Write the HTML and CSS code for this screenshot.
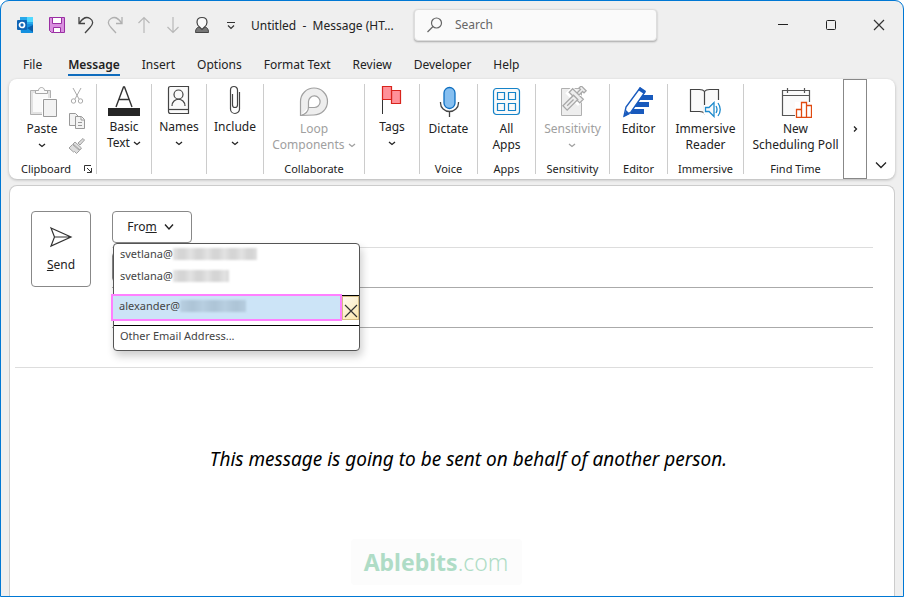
FILE: index.html
```html
<!DOCTYPE html>
<html lang="en">
  <head>
    <meta charset="utf-8">
    <title>Untitled - Message (HTML)</title>
    <link rel="stylesheet" href="styles.css">
  </head>
  <body>
    <div class="window">
      <header class="titlebar">
        <div class="quick">
          <button class="app" aria-label="Outlook">
            <svg width="18" height="18" viewBox="0 0 18 18"><path fill="#28a8ea" d="M4 1h13v8H4z"/><path fill="#50d9ff" d="M11 1h6v5h-6z"/><path fill="#1490df" d="M4 8h13v9H5z"/><path fill="#0a5ca8" d="M17 9v7l-6-4z"/><rect x="1" y="4" width="10" height="10" rx="1" fill="#0f64b5"/><circle cx="6" cy="9" r="2.500" fill="none" stroke="#fff" stroke-width="1.700"/></svg>
          </button>
          <button aria-label="Save">
            <svg width="18" height="18" viewBox="0 0 18 18"><path fill="#d98fdf" stroke="#9a2fa3" d="M1.500 1.500h15v15h-13l-2-2z"/><path fill="#fff" stroke="#9a2fa3" d="M4.500 1.500h9v6h-9zM5.500 11.500h7v5h-7z"/></svg>
          </button>
          <button aria-label="Undo">
            <svg width="18" height="18" viewBox="0 0 18 18" fill="none" stroke="#444" stroke-width="1.300"><path d="M2 1v6.500h6M2.500 7C5 3 9 0 13 2.500s3 6 0 9L8 17"/></svg>
          </button>
          <button aria-label="Redo">
            <svg width="18" height="18" viewBox="0 0 18 18" fill="none" stroke="#b0b0b0" stroke-width="1.300"><path d="M16 1v6.500h-6M15.500 7C13 3 9 0 5 2.500s-3 6 0 9l5 5.500"/></svg>
          </button>
          <button aria-label="Previous item">
            <svg width="18" height="18" viewBox="0 0 18 18" fill="none" stroke="#b8b8b8" stroke-width="1.200"><path d="M9 17V1.500M3.500 7L9 1.500 14.500 7"/></svg>
          </button>
          <button aria-label="Next item">
            <svg width="18" height="18" viewBox="0 0 18 18" fill="none" stroke="#b8b8b8" stroke-width="1.200"><path d="M9 1v15.500M3.500 11L9 16.500l5.500-5.500"/></svg>
          </button>
          <button aria-label="Contact">
            <svg width="18" height="18" viewBox="0 0 18 18"><path fill="#777" stroke="#444" d="M2.500 16.500c0-4 2-5.500 4-5.500h5c2 0 4 1.500 4 5.500z"/><path fill="#fafafa" stroke="#444" stroke-width="1.200" d="M9 1.500c3 0 5 2 5 4.800 0 2-1 3.700-2.500 4.700L9 13.500 6.500 11C5 10 4 8.300 4 6.300 4 3.500 6 1.500 9 1.500z"/></svg>
          </button>
          <button aria-label="Customize toolbar">
            <svg width="18" height="18" viewBox="0 0 18 18" fill="none" stroke="#333" stroke-width="1.200"><path d="M5 6.500h8M6 9.500l3 3 3-3"/></svg>
          </button>
        </div>
        <div class="title">Untitled&nbsp; -&nbsp; Message (HT...</div>
        <label class="search">
          <svg width="16" height="16" viewBox="0 0 16 16" fill="none" stroke="#666" stroke-width="1.200"><circle cx="9.500" cy="6" r="5"/><path d="M6 9.500L.5 15"/></svg>
          <input type="text" placeholder="Search" aria-label="Search">
        </label>
        <div class="window-buttons">
          <button aria-label="Minimize"><svg width="12" height="12" viewBox="0 0 12 12"><path stroke="#222" d="M1 5.500h10"/></svg></button>
          <button aria-label="Maximize"><svg width="12" height="12" viewBox="0 0 12 12"><rect x="1.500" y="1.500" width="9" height="9" rx="1" fill="none" stroke="#222"/></svg></button>
          <button aria-label="Close"><svg width="12" height="12" viewBox="0 0 12 12"><path stroke="#333" stroke-width="1.200" d="M1 1l10 10M11 1L1 11"/></svg></button>
        </div>
      </header>

      <nav class="tabs">
        <a href="#">File</a>
        <a href="#" class="active">Message</a>
        <a href="#">Insert</a>
        <a href="#">Options</a>
        <a href="#">Format Text</a>
        <a href="#">Review</a>
        <a href="#">Developer</a>
        <a href="#">Help</a>
      </nav>

      <section class="ribbon">
        <div class="group clipboard">
          <div class="commands">
            <button class="command tall">
              <svg width="32" height="32" viewBox="0 0 32 32"><path fill="#e2e2e2" stroke="#b0b0b0" d="M4.500 4.500h20v24h-20z"/><path fill="#fafafa" d="M7 7h15v19H7z"/><path fill="#fafafa" stroke="#a8a8a8" d="M9.500 7.500v-3h3c0-4 6-4 6 0h3v3z"/><path fill="#f3f3f3" stroke="#fff" stroke-width="3" d="M17.500 13.500h13v17h-13z"/><path fill="#f3f3f3" stroke="#999" d="M17.500 13.500h13v17h-13z"/></svg>
              <span>Paste</span>
              <svg class="chevron" width="8" height="8" viewBox="0 0 8 8"><path d="M1 3l3 2.500L7 3"/></svg>
            </button>
            <div class="side">
              <button aria-label="Cut"><svg width="18" height="18" viewBox="0 0 18 18" fill="none" stroke="#aaa"><path d="M5 1l6 11M13 1L7 12"/><circle cx="5.500" cy="14" r="2.200"/><circle cx="12.500" cy="14" r="2.200"/></svg></button>
              <button aria-label="Copy"><svg width="18" height="18" viewBox="0 0 18 18" fill="#f3f3f3" stroke="#999"><path d="M1.500 1.500h6l3 3v9h-9z"/><path d="M7.500 4.500h6l3 3v9h-9zM13 5v3h3M10 10.500h4M10 13.500h4"/></svg></button>
              <button aria-label="Format painter"><svg width="18" height="18" viewBox="0 0 18 18" fill="#ddd" stroke="#a0a0a0"><path d="M10 6l5-4.500L16.500 3 12 8zM7 5l6.500 6-1.500 2-7-6zM4.500 7.500l7 6-3 3-2-2-1 .5L1 11z"/></svg></button>
            </div>
          </div>
          <div class="group-name">Clipboard
            <button class="launcher" aria-label="Clipboard options"><svg width="10" height="10" viewBox="0 0 10 10" fill="none" stroke="#333"><path d="M1.500 7V1.500H8M4 4l4 4M8.500 4v4.500H4"/></svg></button>
          </div>
        </div>

        <div class="group">
          <button class="command">
            <svg width="32" height="32" viewBox="0 0 32 32"><path fill="#262626" d="M0 24h32v8H0z"/><path fill="none" stroke="#333" stroke-width="1.400" d="M8 23l7.500-20h1L24 23M11 15.500h10"/></svg>
            <span>Basic<br>Text <svg class="chevron" width="8" height="8" viewBox="0 0 8 8"><path d="M1 3l3 2.500L7 3"/></svg></span>
          </button>
        </div>

        <div class="group">
          <button class="command">
            <svg width="32" height="32" viewBox="0 0 32 32" fill="none" stroke="#444" stroke-width="1.200"><path fill="#fafafa" d="M7.500 2.500h18v27h-18q-2 0-2-2v-23q0-2 2-2z"/><path d="M6 25.500h19.500"/><circle cx="15.500" cy="10.500" r="4.500"/><path d="M9 22c0-9 13-9 13 0"/></svg>
            <span>Names</span>
            <svg class="chevron" width="8" height="8" viewBox="0 0 8 8"><path d="M1 3l3 2.500L7 3"/></svg>
          </button>
        </div>

        <div class="group">
          <button class="command">
            <svg width="32" height="32" viewBox="0 0 32 32" fill="none" stroke="#444" stroke-width="1.200"><path d="M13.500 10v11a2.500 2.500 0 005 0V6a3.500 3.500 0 00-7 0v19a4.500 4.500 0 009 0V8"/></svg>
            <span>Include</span>
            <svg class="chevron" width="8" height="8" viewBox="0 0 8 8"><path d="M1 3l3 2.500L7 3"/></svg>
          </button>
        </div>

        <div class="group">
          <button class="command tall" disabled>
            <svg width="32" height="32" viewBox="0 0 32 32" stroke="#a0a0a0" stroke-width="1.200"><path fill="#eee" d="M2.500 29.500V15.500a13.500 13.500 0 1113.500 13.500z"/><path fill="#fff" d="M10.500 21.500V15.500a5.800 5.800 0 115.500 6zM10.500 21c0 4-2 7-8 8.500"/></svg>
            <span>Loop<br>Components <svg class="chevron" width="8" height="8" viewBox="0 0 8 8"><path d="M1 3l3 2.500L7 3"/></svg></span>
          </button>
          <div class="group-name">Collaborate</div>
        </div>

        <div class="group">
          <button class="command">
            <svg width="32" height="32" viewBox="0 0 32 32"><path stroke="#333" d="M6.500 3v27"/><path fill="#ff9199" stroke="#d8241c" stroke-width="1.200" d="M15.500 6.500h9v13h-9z"/><path fill="#ff9199" stroke="#d8241c" stroke-width="1.200" d="M6.500 2.500h9v13h-9z"/></svg>
            <span>Tags</span>
            <svg class="chevron" width="8" height="8" viewBox="0 0 8 8"><path d="M1 3l3 2.500L7 3"/></svg>
          </button>
        </div>

        <div class="group">
          <button class="command tall">
            <svg width="32" height="32" viewBox="0 0 32 32"><rect x="11" y="1.500" width="11" height="21" rx="5.500" fill="#86bff0" stroke="#0f6fc0" stroke-width="1.300"/><path fill="none" stroke="#444" stroke-width="1.300" d="M7.500 16v1a9 8.500 0 0018 0v-1M16.500 26v5"/></svg>
            <span>Dictate</span>
          </button>
          <div class="group-name">Voice</div>
        </div>

        <div class="group">
          <button class="command tall">
            <svg width="32" height="32" viewBox="0 0 32 32" fill="none" stroke="#1683c8" stroke-width="1.200"><rect x="2.500" y="2.500" width="26" height="26" rx="3" fill="#fafafa"/><path d="M6.500 6.500h7v7h-7zM17.500 6.500h7v7h-7zM6.500 17.500h7v7h-7zM17.500 17.500h7v7h-7z"/></svg>
            <span>All<br>Apps</span>
          </button>
          <div class="group-name">Apps</div>
        </div>

        <div class="group">
          <button class="command tall" disabled>
            <svg width="32" height="32" viewBox="0 0 32 32" fill="#eee" stroke="#b0b0b0"><path d="M5.500 2.500h20v27h-20z"/><g transform="rotate(45 22 8)"><path stroke="#fff" stroke-width="3" d="M14 8h15v7H14z"/><path stroke="#a8a8a8" stroke-width="1.300" d="M18.500 0h7v3h-2v5h-3V3h-2zM14.500 8h15v5h-15z"/></g><g transform="rotate(45 14 17)" stroke="#a8a8a8" stroke-width="1.300"><path d="M11 9h6v15h-6z"/><path d="M14 12v9"/></g></svg>
            <span>Sensitivity</span>
            <svg class="chevron" width="8" height="8" viewBox="0 0 8 8"><path d="M1 3l3 2.500L7 3"/></svg>
          </button>
          <div class="group-name">Sensitivity</div>
        </div>

        <div class="group">
          <button class="command tall">
            <svg width="32" height="32" viewBox="0 0 32 32"><path fill="#185abd" d="M19 9h12v5H16zM16 16h11v5H12zM11 23h11v5H8z"/><path fill="#fff" stroke="#185abd" stroke-width="1.400" d="M18 2l5 4L9 26l-7 4 2-9z"/><path fill="#185abd" d="M18 1l6 4-2 3-6-4zM4 24l-2 7 6-3z"/></svg>
            <span>Editor</span>
          </button>
          <div class="group-name">Editor</div>
        </div>

        <div class="group">
          <button class="command tall">
            <svg width="32" height="32" viewBox="0 0 32 32"><path fill="#fafafa" stroke="#444" stroke-width="1.200" d="M15.500 5.500c-1-1.500-3-2-5-2h-9v22h9c2 0 4 .5 5 2 1-1.500 3-2 5-2h9v-22h-9c-2 0-4 .5-5 2zM15.500 5v22"/><path fill="#fff" stroke="#fff" stroke-width="4" d="M16.500 21h4l5-5h6v15h-6l-5-5h-4z"/><path fill="#fafafa" stroke="#1e8bcd" stroke-width="1.300" d="M16.500 21.500h3.500l5-5v14l-5-5h-3.500z"/><path fill="none" stroke="#1e8bcd" stroke-width="1.300" d="M27 20q2 3.500 0 7M29 17q4.500 6.500 0 13"/></svg>
            <span>Immersive<br>Reader</span>
          </button>
          <div class="group-name">Immersive</div>
        </div>

        <div class="group last">
          <button class="command tall">
            <svg width="32" height="32" viewBox="0 0 32 32"><path fill="#fafafa" stroke="#555" stroke-width="1.200" d="M2.500 4.500h27v25h-27zM2.500 9.500h27M7.500 2v5M24.500 2v5"/><path fill="#fff" d="M15 16h17v16H15z"/><path fill="#fff" stroke="#e04a10" stroke-width="1.300" d="M16.500 23.500h5v8h-5zM21.500 16.500h5v15h-5zM26.500 19.500h5v12h-5z"/></svg>
            <span>New<br>Scheduling Poll</span>
          </button>
          <div class="group-name">Find Time</div>
        </div>

        <button class="more" aria-label="More commands"><svg class="chevron" width="8" height="8" viewBox="0 0 8 8"><path d="M3 1.500L5.500 4 3 6.500"/></svg></button>
        <button class="collapse" aria-label="Collapse ribbon"><svg width="12" height="8" viewBox="0 0 12 8" fill="none" stroke="#222" stroke-width="1.300"><path d="M1 1.500l5 5 5-5"/></svg></button>
      </section>

      <main class="mail">
        <div class="envelope">
          <button class="send">
            <svg width="24" height="24" viewBox="0 0 24 24" fill="none" stroke="#333" stroke-width="1.200"><path d="M2 3l20 9L2 21l3.500-9zM5.500 12H22"/></svg>
            <span><u>S</u>end</span>
          </button>
          <div class="fields">
            <div class="field">
              <button class="from">Fro<u>m</u>
                <svg width="10" height="8" viewBox="0 0 10 8" fill="none" stroke="#222" stroke-width="1.400"><path d="M1 1.500L5 6l4-4.500"/></svg>
              </button>
              <div class="menu">
                <button class="item">svetlana@<span class="masked long"></span></button>
                <button class="item">svetlana@<span class="masked"></span></button>
                <div class="recent">
                  <button class="item selected">alexander@<span class="masked blue"></span></button>
                  <button class="remove" aria-label="Remove address"><svg width="14" height="14" viewBox="0 0 14 14"><path stroke="#333" stroke-width="1.200" d="M1 1l12 12M13 1L1 13"/></svg></button>
                </div>
                <button class="item other">Other Email Address...</button>
              </div>
            </div>
            <div class="field entry"><button class="to" aria-label="To"></button></div>
            <div class="field entry"></div>
          </div>
        </div>
        <div class="subject"></div>
        <p class="message">This message is going to be sent on behalf of another person.</p>
        <div class="brand"><b>Ablebits</b>.com</div>
      </main>
    </div>
  </body>
</html>
```
FILE: styles.css
```css
* {
  box-sizing: border-box;
}

body {
  margin: 0;
  background: #fff;
  color: #222;
  font-family: "Noto Sans", sans-serif;
  font-size: 12px;
  line-height: 16px;
}

button {
  padding: 0;
  border: 0;
  background: none;
  color: inherit;
  font: inherit;
}

svg {
  flex: none;
}

.window {
  display: flex;
  flex-direction: column;
  min-height: 100vh;
  padding: 0 8px;
  border: 1px solid #0078d4;
  border-radius: 9px 9px 0 0;
  background: #efefef;
}

/* Title bar */
.titlebar {
  display: flex;
  align-items: center;
  height: 48px;
}

.quick {
  display: flex;
  gap: 11px;
  padding-left: 7px;
}

.quick button {
  display: flex;
}

.quick .app {
  margin-right: 3px;
}

.title {
  width: 152px;
  margin: 0 11px;
  padding-top: 2px;
  white-space: nowrap;
}

.search {
  display: flex;
  flex: 0 1 243px;
  align-items: center;
  gap: 12px;
  height: 32px;
  padding: 0 12px;
  border: 1px solid #ddd;
  border-radius: 4px;
  background: #fafafa;
  box-shadow: 0 1px 2px rgba(0, 0, 0, 0.3);
}

.search input {
  width: 100%;
  min-width: 0;
  padding: 0;
  border: 0;
  outline: 0;
  background: none;
  font: inherit;
}

.search input::placeholder {
  color: #666;
  opacity: 1;
}

.window-buttons {
  display: flex;
  margin-left: auto;
  margin-right: -8px;
}

.window-buttons button {
  display: flex;
  align-items: center;
  justify-content: center;
  width: 48px;
  height: 32px;
}

/* Tabs */
.tabs {
  display: flex;
  gap: 22px;
  height: 30px;
  padding: 8px 14px 0;
}

.tabs a {
  height: 19px;
  color: #222;
  text-decoration: none;
  white-space: nowrap;
}

.tabs a:first-child {
  margin-right: 4px;
}

.tabs .active {
  border-bottom: 2px solid #0f6cbd;
  font-weight: 600;
}

/* Ribbon */
.ribbon {
  display: grid;
  grid-template-columns: 88fr 55fr 55fr 57fr 101fr 55fr 58fr 58fr 74fr 58fr 76fr 99fr 24px 28px;
  height: 100px;
  border-radius: 8px;
  background: #fff;
  box-shadow: 0 1px 3px rgba(0, 0, 0, 0.25);
}

.group {
  display: flex;
  flex-direction: column;
  align-items: center;
  min-width: 0;
  margin: 5px 0;
  border-right: 1px solid #ccc;
  white-space: nowrap;
}

.group.last {
  padding-left: 4px;
  border-right: 0;
}

.command {
  display: flex;
  flex-direction: column;
  align-items: center;
}

.command > span {
  margin-top: 3px;
}

.command.tall {
  padding-top: 2px;
}

.command:disabled {
  color: #a0a0a0;
}

.chevron {
  fill: none;
  stroke: #222;
  stroke-width: 1.3px;
}

.command > .chevron {
  margin-top: 4px;
}

:disabled .chevron {
  stroke: #a0a0a0;
}

.group-name {
  margin-top: auto;
  font-size: 11px;
  line-height: 10px;
}

.commands {
  display: flex;
  gap: 10px;
  padding-left: 7px;
}

.side {
  display: flex;
  flex-direction: column;
  gap: 7px;
  padding-top: 3px;
}

.side button {
  display: flex;
}

.clipboard .group-name {
  display: flex;
  align-items: center;
  gap: 12px;
  padding-left: 9px;
}

.launcher {
  display: flex;
}

.more {
  border: 1px solid #888;
}

.collapse {
  align-self: end;
  height: 28px;
}

/* Message */
.mail {
  display: flex;
  flex: 1;
  flex-direction: column;
  margin-top: 6px;
  padding: 0 21px 0 5px;
  border: 1px solid #ccc;
  border-bottom: 0;
  border-radius: 8px 8px 0 0;
  background: #fff;
}

.envelope {
  display: flex;
  gap: 21px;
  padding: 25px 0 0 16px;
}

.send {
  display: flex;
  flex-direction: column;
  align-items: center;
  justify-content: center;
  gap: 8px;
  width: 60px;
  height: 76px;
  border: 1px solid #888;
  border-radius: 4px;
}

.fields {
  flex: 1;
}

.field {
  position: relative;
  height: 37px;
  border-bottom: 1px solid #ddd;
}

.field.entry {
  height: 40px;
  padding-top: 4px;
  border-bottom-color: #aaa;
}

.from {
  display: flex;
  align-items: center;
  justify-content: center;
  width: 80px;
  height: 32px;
  padding-right: 3px;
  border: 1px solid #888;
  border-radius: 4px;
}

.from svg {
  margin-left: 7px;
}

.to {
  display: block;
  width: 80px;
  height: 30px;
  border: 1px solid #888;
  border-radius: 4px;
}

.menu {
  position: absolute;
  z-index: 1;
  top: 32px;
  left: 1px;
  width: 247px;
  border: 1px solid #555;
  border-radius: 4px;
  background: #fff;
  box-shadow: 2px 5px 8px rgba(0, 0, 0, 0.2);
  color: #444;
  font-size: 11px;
}

.item {
  display: flex;
  align-items: center;
  width: 100%;
  height: 22px;
  padding: 0 0 2px 6px;
}

.recent {
  display: flex;
  height: 31px;
  margin-top: 7px;
  border-top: 1px solid #000;
  border-bottom: 1px solid #000;
}

.selected {
  flex: 1;
  height: 27px;
  margin: -2px 0 0 -3px;
  padding-bottom: 3px;
  border: 2px solid #ff80ff;
  background: #cce4f7;
}

.remove {
  display: flex;
  align-items: end;
  justify-content: center;
  width: 17px;
  height: 24px;
  padding-bottom: 1px;
  border: 1px solid #d5bd83;
  background: linear-gradient(135deg, #fffaf0, #fbe8ae);
}

.other {
  height: 24px;
  padding-bottom: 4px;
}

.masked {
  width: 56px;
  height: 12px;
  background: repeating-linear-gradient(90deg, #e4e4e4 0, #d4d4d4 7px, #d6d6d6 12px, #e2e2e2 17px);
  filter: blur(1px);
}

.masked.long {
  width: 84px;
}

.masked.blue {
  width: 66px;
  background: repeating-linear-gradient(90deg, #b9d0e2 0, #adc4d6 12px, #b6cddf 22px);
}

.subject {
  height: 40px;
  border-bottom: 1px solid #ddd;
}

.message {
  margin: 78px 0 0;
  padding-left: 49px;
  color: #000;
  font-size: 19px;
  font-style: italic;
  line-height: 26px;
  text-align: center;
}

.brand {
  width: 171px;
  margin: auto 16px 11px 0;
  align-self: center;
  border-radius: 4px;
  background: #fcfcfc;
  color: #afdcc6;
  font-size: 23px;
  font-weight: 300;
  line-height: 46px;
  text-align: center;
}

.brand b {
  font-weight: 700;
}
```
